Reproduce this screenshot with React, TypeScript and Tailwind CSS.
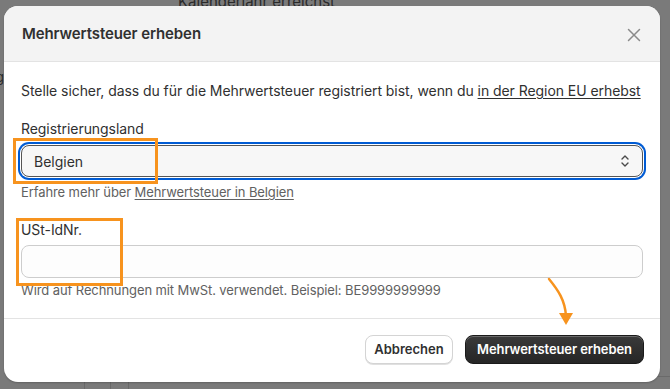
import React from "react";

export default function App() {
  return (
    <div
      className="relative w-[670px] h-[389px] overflow-hidden bg-[#7a7a7a]"
      style={{ fontFamily: "Inter, 'Liberation Sans', sans-serif" }}
    >
      {/* dimmed page behind */}
      <div className="absolute left-[178px] top-[-9px] text-[15px] text-[#2a2a2a] whitespace-nowrap">
        Kalenderjahr erreichst
      </div>
      <div className="absolute left-[84px] top-[370px] w-px h-[30px] bg-[#6a6a6a]" />
      <div className="absolute left-[110px] top-[370px] w-px h-[30px] bg-[#6a6a6a]" />
      <div className="absolute left-[128px] top-[376px] w-[560px] h-[40px] rounded-[6px] border border-[#6a6a6a]" />
      <div className="absolute left-[-4px] top-[68px] text-[13px] text-[#2a2a2a]">g</div>

      {/* modal */}
      <div className="absolute left-[4px] top-[6px] w-[656px] h-[376px] bg-white rounded-[14px] overflow-hidden flex flex-col shadow-[0_1px_2px_rgba(0,0,0,0.2)]">
        <div className="h-[56px] shrink-0 bg-[#f3f3f3] border-b border-[#e3e3e3] flex items-center justify-between pl-[18px] pr-[19px] pt-[2px]">
          <div className="text-[15px] font-semibold tracking-[-0.1px] text-[#303030]">Mehrwertsteuer erheben</div>
          <svg width="14" height="14" viewBox="0 0 14 14">
            <path d="M1.5 1.5 L12.5 12.5 M12.5 1.5 L1.5 12.5" stroke="#8a8a8a" strokeWidth="1.5" strokeLinecap="round" />
          </svg>
        </div>

        <div className="flex-1 px-[17px] pt-[19px] flex flex-col">
          <p className="text-[14px] leading-[20px] tracking-[-0.06px] text-[#303030] whitespace-nowrap">
            Stelle sicher, dass du für die Mehrwertsteuer registriert bist, wenn du{" "}
            <span className="underline underline-offset-2">in der Region EU erhebst</span>
          </p>

          <div className="mt-[18px] text-[14px] leading-[20px] tracking-[-0.06px] text-[#303030]">Registrierungsland</div>
          <div className="mt-[6px] h-[32px] rounded-[8px] border border-[#555] bg-[#f7f7f7] flex items-center justify-between pl-[12px] pr-[12px] shadow-[0_0_0_1px_#ffffff,0_0_0_3px_#005bd3]">
            <span className="text-[14px] text-[#303030]">Belgien</span>
            <svg width="10" height="16" viewBox="0 0 10 16">
              <path d="M2 6 L5 3 L8 6 M2 10 L5 13 L8 10" fill="none" stroke="#4a4a4a" strokeWidth="1.4" strokeLinecap="round" strokeLinejoin="round" />
            </svg>
          </div>
          <div className="mt-[5px] text-[13px] leading-[20px] tracking-[-0.1px] text-[#616161]">
            Erfahre mehr über <span className="underline underline-offset-2">Mehrwertsteuer in Belgien</span>
          </div>

          <div className="mt-[18px] text-[14px] leading-[20px] tracking-[-0.06px] text-[#303030]">USt-IdNr.</div>
          <div className="mt-[5px] h-[33px] rounded-[8px] border border-[#cdcdcd] bg-[#fdfdfd]" />
          <div className="mt-[2px] text-[13px] leading-[20px] tracking-[-0.1px] text-[#616161]">
            Wird auf Rechnungen mit MwSt. verwendet. Beispiel: BE9999999999
          </div>
        </div>

        <div className="h-[64px] shrink-0 border-t border-[#e3e3e3] flex items-start justify-end gap-[12px] pt-[16px] pr-[16px]">
          <button className="h-[29px] w-[88px] rounded-[8px] bg-white border border-[#d4d4d4] shadow-[0_1px_0_rgba(0,0,0,0.12)] text-[13px] font-semibold text-[#303030]">
            Abbrechen
          </button>
          <button className="h-[29px] w-[179px] rounded-[8px] bg-gradient-to-b from-[#3a3a3a] to-[#262626] border border-[#1a1a1a] shadow-[inset_0_1px_0_rgba(255,255,255,0.25)] text-[13px] font-semibold tracking-[-0.1px] text-white">
            Mehrwertsteuer erheben
          </button>
        </div>
      </div>

      {/* annotations */}
      <div className="absolute left-[13px] top-[138px] w-[145px] h-[46px] border-[3px] border-[#f7931e]" />
      <div className="absolute left-[16px] top-[218px] w-[107px] h-[68px] border-[3px] border-[#f7931e]" />
      <svg className="absolute left-[540px] top-[276px]" width="40" height="52" viewBox="0 0 40 52">
        <path d="M9 3 C 18 14, 25 24, 26 40" fill="none" stroke="#f7931e" strokeWidth="2.5" strokeLinecap="round" />
        <path d="M19 37 L33 37 L26 49 Z" fill="#f7931e" />
      </svg>
    </div>
  );
}
